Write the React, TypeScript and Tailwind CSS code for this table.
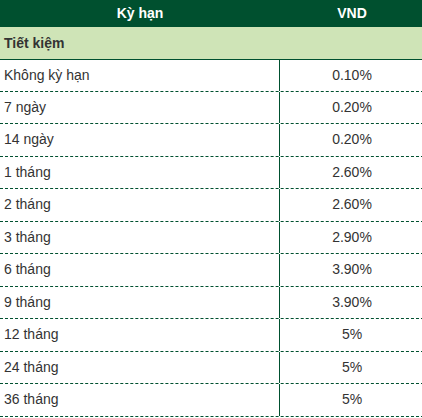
import React from "react";

const rows: [string, string][] = [
  ["Không kỳ hạn", "0.10%"],
  ["7 ngày", "0.20%"],
  ["14 ngày", "0.20%"],
  ["1 tháng", "2.60%"],
  ["2 tháng", "2.60%"],
  ["3 tháng", "2.90%"],
  ["6 tháng", "3.90%"],
  ["9 tháng", "3.90%"],
  ["12 tháng", "5%"],
  ["24 tháng", "5%"],
  ["36 tháng", "5%"],
];

export default function App() {
  return (
    <div
      className="w-[422px] overflow-hidden bg-white text-[14px] text-[#333333]"
      style={{ fontFamily: '"Liberation Sans", Arial, sans-serif' }}
    >
      <div className="w-[424px]">
        <div className="flex h-[27px] items-center bg-[#00502f] font-bold text-white">
          <div className="w-[280px] text-center">Kỳ hạn</div>
          <div className="flex-1 text-center">VND</div>
        </div>
        <div className="flex h-[33px] items-center border-b border-[#00502f] bg-[#cfe4b7] pl-[4px] font-bold">
          Tiết kiệm
        </div>
        {rows.map(([k, v], i) => (
          <div
            key={k}
            className={`flex border-b border-dashed border-[#00502f] ${i === 0 ? "h-[31.5px]" : "h-[32.5px]"}`}
          >
            <div className="flex w-[280px] items-center border-r border-[#00502f] pl-[4px]">{k}</div>
            <div className="flex flex-1 items-center justify-center">{v}</div>
          </div>
        ))}
      </div>
    </div>
  );
}
